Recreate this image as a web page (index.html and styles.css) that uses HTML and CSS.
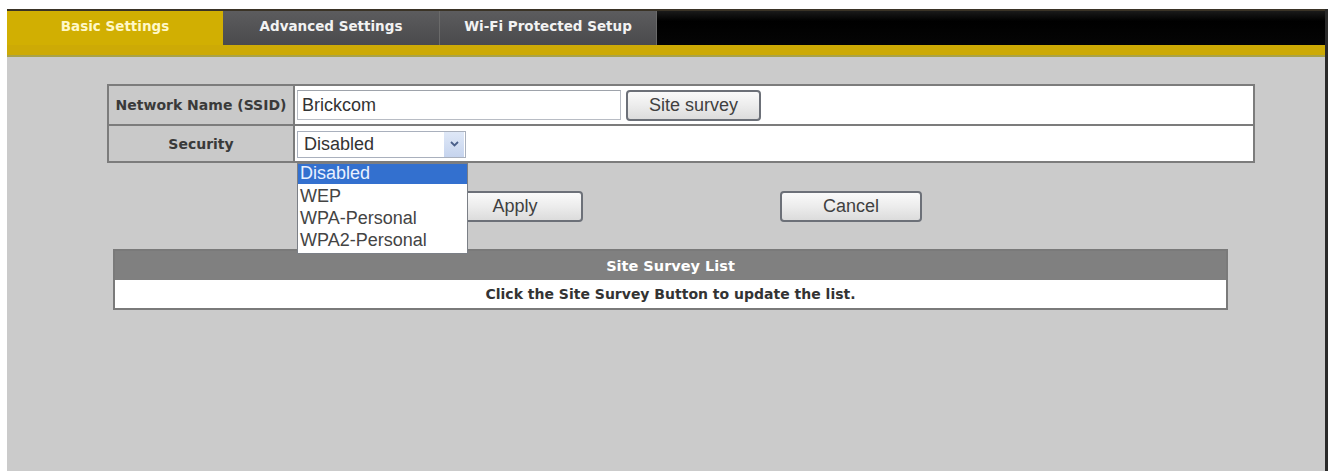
FILE: index.html
```html
<!DOCTYPE html>
<html lang="en">

<head>
    <meta charset="UTF-8">
    <link rel="stylesheet" href="styles.css">
</head>

<body>
    <div id="frame">
        <div id="tabs">
            <a href="#" class="tab active">Basic Settings</a>
            <a href="#" class="tab">Advanced Settings</a>
            <a href="#" class="tab">Wi-Fi Protected Setup</a>
            <div class="tab-fill"></div>
        </div>
        <div id="strip"></div>

        <div id="content">
            <table class="form">
                <tr class="row-ssid">
                    <th>Network Name (SSID)</th>
                    <td>
                        <div class="field-line">
                            <div class="text-input">Brickcom</div>
                            <button class="button survey">Site survey</button>
                        </div>
                    </td>
                </tr>
                <tr class="row-security">
                    <th>Security</th>
                    <td>
                        <div class="select">
                            <span class="select-value">Disabled</span>
                            <span class="select-arrow">
                                <svg width="9" height="6" viewBox="0 0 9 6">
                                    <path d="M1 1 L4.5 4.5 L8 1" fill="none" stroke="#4a5f8a" stroke-width="1.8"/>
                                </svg>
                            </span>
                            <ul class="select-list">
                                <li class="selected">Disabled</li>
                                <li>WEP</li>
                                <li>WPA-Personal</li>
                                <li>WPA2-Personal</li>
                            </ul>
                        </div>
                    </td>
                </tr>
            </table>

            <div class="actions">
                <button class="button apply">Apply</button>
                <button class="button cancel">Cancel</button>
            </div>

            <table class="survey-list">
                <tr>
                    <th>Site Survey List</th>
                </tr>
                <tr>
                    <td>Click the Site Survey Button to update the list.</td>
                </tr>
            </table>
        </div>
    </div>
</body>

</html>
```

FILE: styles.css
```css
body {
    margin: 0;
    padding: 9px 0 0 7px;
    background-color: #fff;
    font-family: "Liberation Sans", Arial, sans-serif;
    height: 100vh;
    box-sizing: border-box;
    overflow: hidden;
}

#frame {
    width: 1318px;
    height: 100%;
    border-right: 3px solid #2a2a2a;
    background-color: #cbcbcb;
    display: flex;
    flex-direction: column;
}

#tabs {
    display: flex;
    height: 36px;
    background: linear-gradient(#1a1a1a, #000 30%, #050505);
    border-top: 2px solid #3a3326;
    box-sizing: border-box;
}

.tab {
    display: flex;
    align-items: center;
    justify-content: center;
    width: 217px;
    color: #f2f2f2;
    font-family: "DejaVu Sans", sans-serif;
    font-size: 13.5px;
    font-weight: bold;
    text-decoration: none;
    background: linear-gradient(#5c5c5e, #4a4a4c);
    border-right: 1px solid #6a6a6a;
    padding-bottom: 4px;
    box-sizing: border-box;
}

.tab.active {
    width: 216px;
    color: #fff8c8;
    background: #d1af02;
    border-right: none;
}

.tab-fill {
    flex: 1;
}

#strip {
    height: 10px;
    background-color: #cdaa05;
    border-bottom: 2px solid #a8a24a;
}

#content {
    flex: 1;
    padding-top: 27px;
}

table {
    border-collapse: collapse;
}

.form {
    width: 1148px;
    margin-left: 100px;
    border: 2px solid #7c7c7c;
}

.form th,
.form td {
    border: 2px solid #7c7c7c;
    padding: 0;
}

.form th {
    width: 184px;
    color: #3a3a3a;
    font-family: "DejaVu Sans", sans-serif;
    font-size: 14px;
    font-weight: bold;
    text-align: center;
    background-color: #c9c9c9;
}

.form td {
    background-color: #fff;
    padding-left: 2px;
}

.row-ssid {
    height: 40px;
}

.row-security {
    height: 37px;
}

.field-line {
    display: flex;
    align-items: center;
    gap: 5px;
}

.text-input {
    width: 318px;
    height: 28px;
    border: 1px solid #b8bcc4;
    border-top-color: #9ea3ab;
    padding-left: 4px;
    font-size: 18px;
    line-height: 28px;
    color: #333;
}

.button {
    font-family: "Liberation Sans", Arial, sans-serif;
    font-size: 18px;
    color: #404040;
    background: linear-gradient(#fafafa, #ececec 50%, #dcdcdc);
    border: 2px solid #6c7078;
    border-radius: 4px;
    height: 31px;
    padding: 0;
}

.survey {
    width: 135px;
}

.select {
    position: relative;
    width: 169px;
    height: 27px;
    border: 1px solid #a9b0bd;
    display: flex;
    align-items: center;
    box-sizing: border-box;
    margin-top: 1px;
}

.select-value {
    flex: 1;
    font-size: 18px;
    color: #333;
    padding-left: 6px;
}

.select-arrow {
    width: 20px;
    height: 25px;
    margin-right: 1px;
    background: linear-gradient(#dfe8f7, #c6d4ee);
    display: flex;
    align-items: center;
    justify-content: center;
}

.select-list {
    position: absolute;
    top: 31px;
    left: -1px;
    width: 171px;
    margin: 0;
    padding: 0;
    list-style: none;
    background-color: #fff;
    border: 1px solid #7b7f86;
    box-sizing: border-box;
    z-index: 2;
}

.select-list li {
    height: 22px;
    line-height: 19px;
    font-size: 18px;
    color: #444;
    padding-left: 2px;
}

.select-list li.selected {
    height: 20px;
    margin-bottom: 3px;
    background-color: #3370cf;
    color: #e8f0ff;
}

.actions {
    display: flex;
    margin-top: 28px;
    padding-left: 440px;
}

.apply {
    width: 136px;
}

.cancel {
    width: 142px;
    margin-left: 197px;
}

.survey-list {
    width: 1115px;
    margin-left: 106px;
    margin-top: 27px;
    border: 2px solid #7a7a7a;
    font-family: "DejaVu Sans", sans-serif;
}

.survey-list th {
    height: 29px;
    background-color: #808080;
    color: #fff;
    font-size: 14.5px;
    font-weight: bold;
    padding: 0;
}

.survey-list td {
    height: 28px;
    background-color: #fff;
    color: #333;
    font-size: 14px;
    font-weight: bold;
    text-align: center;
    padding: 0;
}
```
